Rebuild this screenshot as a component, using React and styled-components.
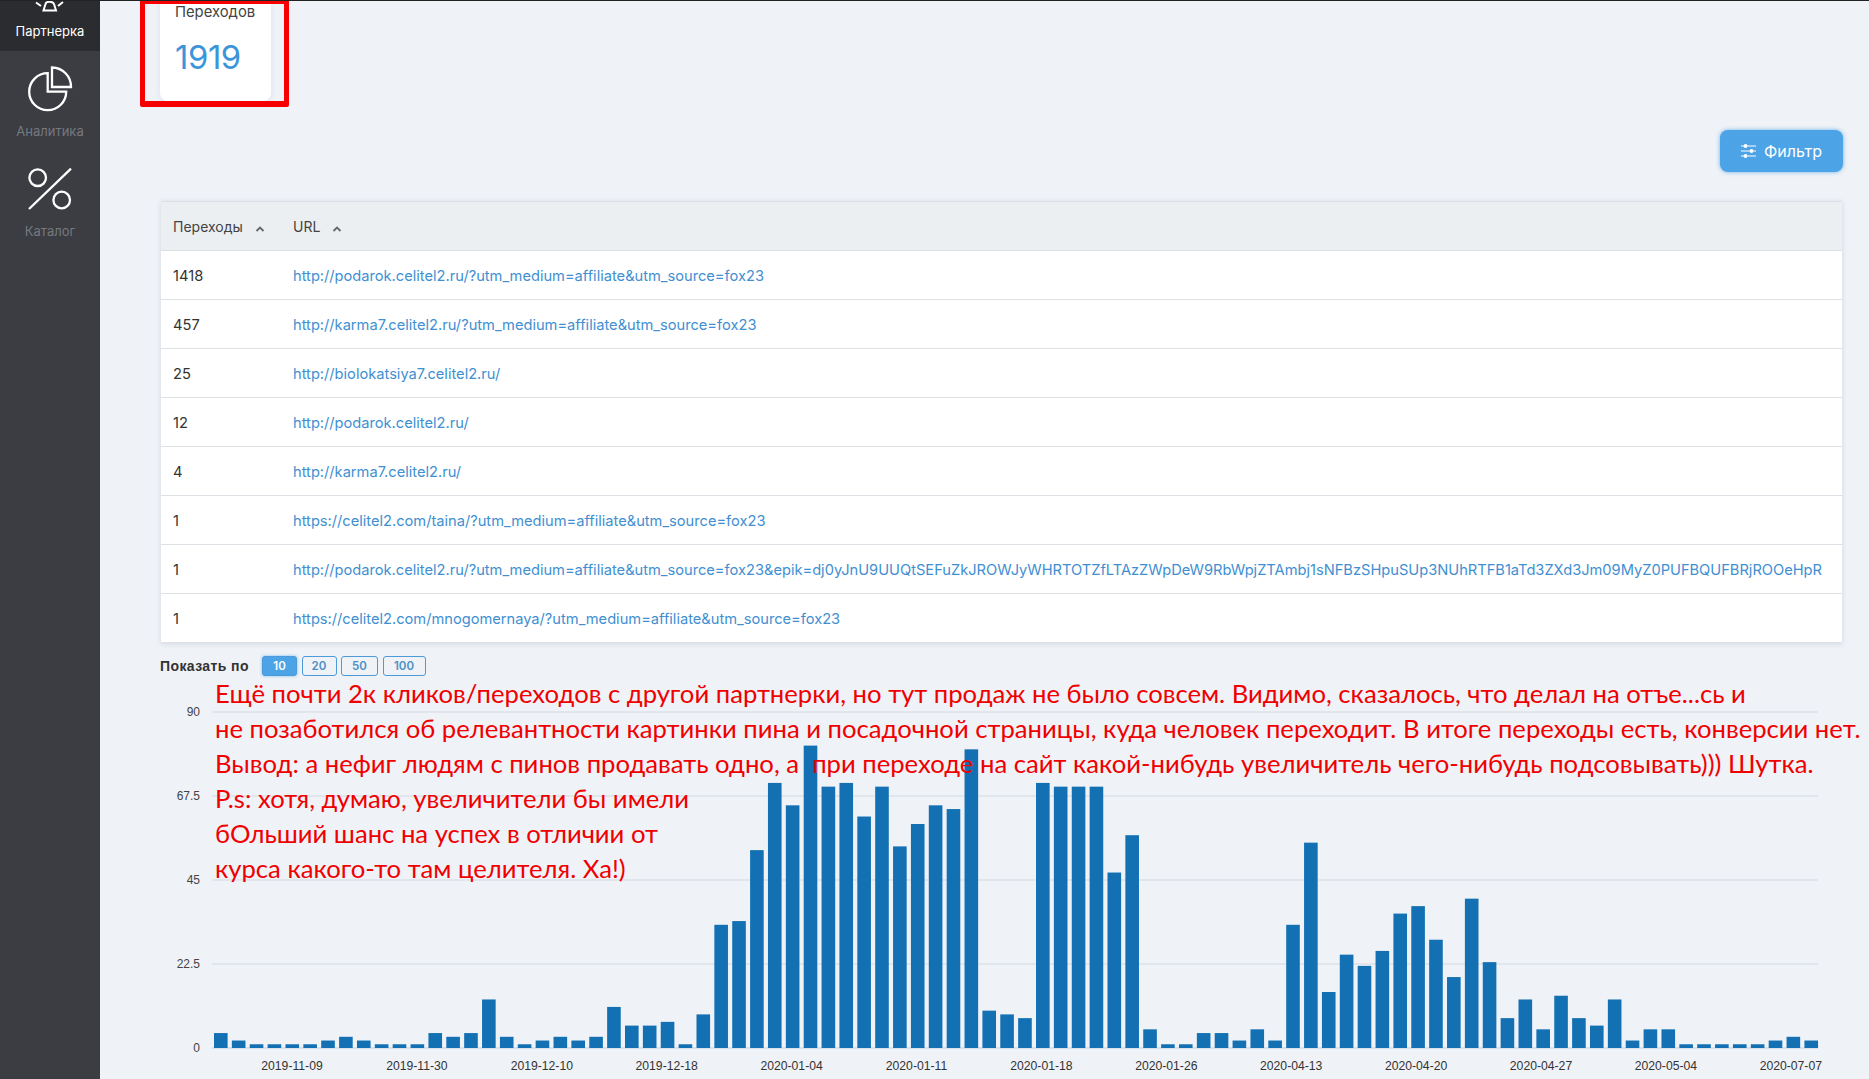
import React from "react";
import styled, { createGlobalStyle } from "styled-components";

const Global = createGlobalStyle`
  html, body { margin: 0; padding: 0; height: 100%; overflow: hidden; background: #eff2f7; }
  #root { height: 100%; }
`;

const Shell = styled.div`
  position: relative;
  display: flex;
  width: 1869px;
  height: 1079px;
  overflow: hidden;
  background: #eff2f7;
  border-top: 1px solid #222;
  box-sizing: border-box;
  font-family: Inter, "Noto Sans", sans-serif;
  color: #333;
`;

const Sidebar = styled.nav`
  width: 100px;
  flex: none;
  background: #3b3d43;
  display: flex;
  flex-direction: column;
`;

const NavItem = styled.a`
  height: ${(p) => p.$h}px;
  display: flex;
  flex-direction: column;
  align-items: center;
  justify-content: flex-end;
  gap: ${(p) => (p.$active ? 10 : 11)}px;
  padding-bottom: 12px;
  box-sizing: border-box;
  background: ${(p) => (p.$active ? "#2b2c30" : "transparent")};
  color: ${(p) => (p.$active ? "#fff" : "#77797e")};
  font-size: 13px;
  line-height: 16px;
  overflow: hidden;
  svg { flex: none; }
`;

const Main = styled.main`
  flex: 1;
  min-width: 0;
  padding: 0 26px 0 60px;
  display: flex;
  flex-direction: column;
`;

const StatCard = styled.div`
  width: 111px;
  height: 100px;
  box-sizing: border-box;
  background: #fff;
  border-radius: 0 0 8px 8px;
  box-shadow: 0 1px 6px rgba(40, 60, 90, 0.08);
  padding: 1px 15px 0 15px;
`;

const StatLabel = styled.div`
  font-size: 14.8px;
  line-height: 20px;
  color: #444;
`;

const StatValue = styled.div`
  margin-top: 15px;
  font-size: 32.8px;
  line-height: 40px;
  letter-spacing: -0.4px;
  color: #3c95d9;
`;

const RedFrame = styled.div`
  position: absolute;
  left: 140px;
  top: -3px;
  width: 149px;
  height: 109px;
  box-sizing: border-box;
  border: 6px solid #f60000;
  border-left-width: 5px;
  border-right-width: 5px;
  border-radius: 2px;
`;

const ToolRow = styled.div`
  display: flex;
  justify-content: flex-end;
  margin-top: 29px;
  margin-bottom: 29px;
`;

const FilterButton = styled.button`
  width: 123px;
  height: 42px;
  display: flex;
  align-items: center;
  justify-content: center;
  gap: 8px;
  border: none;
  border-radius: 8px;
  background: #4ca3e6;
  box-shadow: 0 0 4px rgba(76, 163, 230, 0.8);
  color: #fff;
  font: 16px Inter, "Noto Sans", sans-serif;
`;

const Table = styled.table`
  width: calc(100% - 2px);
  margin: 0 1px;
  border-collapse: collapse;
  table-layout: fixed;
  background: #fff;
  box-shadow: 0 1px 5px rgba(40, 60, 90, 0.14);
  font-size: 14.7px;
`;

const HeadRow = styled.tr`
  height: 49px;
  background: #eceff2;
  border-top: 1px solid #dcdfe3;
  border-bottom: 1px solid #dcdfe3;
`;

const HeadCell = styled.th`
  width: ${(p) => p.$w || "auto"};
  padding: 0 12px;
  text-align: left;
  font-weight: 400;
  font-size: 14px;
  color: #444;
`;

const Row = styled.tr`
  height: 49px;
  border-bottom: 1px solid #dde0e4;
`;

const Cell = styled.td`
  padding: 1px 12px 0;
  color: #333;
  white-space: nowrap;
`;

const LinkText = styled.a`
  color: #3f8fd2;
  font-size: 14.65px;
`;

const Caret = styled.svg`
  width: 10px;
  height: 6px;
  margin-left: 12px;
  vertical-align: 0;
`;

const Pager = styled.div`
  display: flex;
  align-items: center;
  gap: 4.5px;
  margin-top: 13px;
  height: 20px;
`;

const PagerLabel = styled.span`
  width: 97.5px;
  font: bold 14px "Liberation Sans", sans-serif;
  color: #333;
  letter-spacing: 0.4px;
  white-space: nowrap;
`;

const PageButton = styled.button`
  width: ${(p) => p.$w}px;
  height: 20px;
  padding: 0;
  box-sizing: border-box;
  border-radius: 3px;
  border: 1px solid #4c9ad9;
  background: ${(p) => (p.$active ? "#4ca3e6" : "transparent")};
  box-shadow: ${(p) => (p.$active ? "0 0 3px rgba(76,163,230,.7)" : "none")};
  color: ${(p) => (p.$active ? "#fff" : "#4c8fc5")};
  font: 600 11.5px Inter, sans-serif;
`;

const Chart = styled.svg`
  display: block;
  position: absolute;
  left: 100px;
  top: 689px;
  width: 1769px;
  height: 389px;
  font-family: "Liberation Sans", sans-serif;
`;

const Note = styled.div`
  position: absolute;
  left: 215px;
  top: 675px;
  font-family: Lato, "Open Sans", sans-serif;
  font-size: 25.65px;
  line-height: 35.1px;
  color: #f00000;
  white-space: pre;
`;

const urls = [
  ["1418", "http://podarok.celitel2.ru/?utm_medium=affiliate&utm_source=fox23"],
  ["457", "http://karma7.celitel2.ru/?utm_medium=affiliate&utm_source=fox23"],
  ["25", "http://biolokatsiya7.celitel2.ru/"],
  ["12", "http://podarok.celitel2.ru/"],
  ["4", "http://karma7.celitel2.ru/"],
  ["1", "https://celitel2.com/taina/?utm_medium=affiliate&utm_source=fox23"],
  ["1", "http://podarok.celitel2.ru/?utm_medium=affiliate&utm_source=fox23&epik=dj0yJnU9UUQtSEFuZkJROWJyWHRTOTZfLTAzZWpDeW9RbWpjZTAmbj1sNFBzSHpuSUp3NUhRTFB1aTd3ZXd3Jm09MyZ0PUFBQUFBRjROOeHpR"],
  ["1", "https://celitel2.com/mnogomernaya/?utm_medium=affiliate&utm_source=fox23"],
];

const values = [
  4,2,1,1,1,1,2,3,2,1,1,1,4,3,4,13,3,1,2,3,2,3,11,6,6,7,1,9,33,34,
  53,71,65,81,70,71,62,70,54,60,65,64,80,10,9,8,71,70,70,70,47,57,5,1,1,4,4,2,5,2,
  33,55,15,25,22,26,36,38,29,19,40,23,8,13,5,14,8,6,13,2,5,5,1,1,1,1,1,2,3,2,
];

const dates = ["2019-11-09","2019-11-30","2019-12-10","2019-12-18","2020-01-04","2020-01-11","2020-01-18","2020-01-26","2020-04-13","2020-04-20","2020-04-27","2020-05-04","2020-07-07"];
const ticks = ["90", "67.5", "45", "22.5", "0"];

const note = `Ещё почти 2к кликов/переходов с другой партнерки, но тут продаж не было совсем. Видимо, сказалось, что делал на отъе...сь и
не позаботился об релевантности картинки пина и посадочной страницы, куда человек переходит. В итоге переходы есть, конверсии нет.
Вывод: а нефиг людям с пинов продавать одно, а  при переходе на сайт какой-нибудь увеличитель чего-нибудь подсовывать))) Шутка.
P.s: хотя, думаю, увеличители бы имели
бОльший шанс на успех в отличии от
курса какого-то там целителя. Ха!)`;

const SortCaret = () => (
  <Caret viewBox="0 0 10 6">
    <path d="M1.5 5 L5 1.5 L8.5 5" fill="none" stroke="#666" strokeWidth="1.8" />
  </Caret>
);

const PartnerIcon = () => (
  <svg width="38" height="18" viewBox="0 0 38 18" fill="none" stroke="#fff" strokeWidth="2">
    <path d="M5 7.5 L10 11 M32 7 L27 11" />
    <path d="M12.5 15.5 H25 L23 9 C22 6 15 6 14.5 9 Z" />
  </svg>
);

const PieIcon = () => (
  <svg width="46" height="46" viewBox="0 0 46 46" fill="none" stroke="#fff" strokeWidth="2.3">
    <path d="M20.7 7.2 A18.5 18.5 0 1 0 39.2 25.7 L20.7 25.7 Z" />
    <path d="M25 1.5 A19.2 19.2 0 0 1 44 21 L25 21 Z" />
  </svg>
);

const PercentIcon = () => (
  <svg width="46" height="46" viewBox="0 0 46 46" fill="none" stroke="#fff" strokeWidth="2.3">
    <path d="M44 2.7 L2 43" />
    <circle cx="10.7" cy="11.7" r="8.3" />
    <circle cx="34.7" cy="34" r="8.3" />
  </svg>
);

const SlidersIcon = () => (
  <svg width="15" height="14" viewBox="0 0 15 14" stroke="#fff" strokeWidth="1.1" fill="#fff">
    <path d="M0 2 H15 M0 7 H15 M0 12 H15" />
    <circle cx="4.5" cy="2" r="1.9" stroke="none" />
    <circle cx="10.5" cy="7" r="1.9" stroke="none" />
    <circle cx="4.5" cy="12" r="1.9" stroke="none" />
  </svg>
);

const ChartView = () => {
  const ox = 100, oy = 690;
  const base = 1048 - oy;
  const unit = 336 / 90;
  return (
    <Chart viewBox="0 0 1769 389">
      {ticks.map((t, i) => {
        const y = 712 - oy + i * 84;
        return (
          <g key={t}>
            <line x1={212 - ox} x2={1818 - ox} y1={y} y2={y} stroke={i === 4 ? "#cfdbe8" : "#dde1e8"} strokeWidth="1.5" />
            <text x={200 - ox} y={y + 4} textAnchor="end" fontSize="12" fill="#444">{t}</text>
          </g>
        );
      })}
      {values.map((v, i) => (
        <rect key={i} x={214 - ox + i * 17.87} y={base - v * unit} width="13.6" height={v * unit} fill="#1270b3" />
      ))}
      {dates.map((d, i) => (
        <text key={d} x={292 - ox + i * 124.9} y={1070 - oy} textAnchor="middle" fontSize="12.2" fill="#333">{d}</text>
      ))}
    </Chart>
  );
};

export default function App() {
  return (
    <Shell>
      <Global />
      <Sidebar>
        <NavItem $active $h={50}><PartnerIcon />Партнерка</NavItem>
        <NavItem $h={100}><PieIcon />Аналитика</NavItem>
        <NavItem $h={100}><PercentIcon />Каталог</NavItem>
      </Sidebar>
      <Main>
        <StatCard>
          <StatLabel>Переходов</StatLabel>
          <StatValue>1919</StatValue>
        </StatCard>
        <ToolRow>
          <FilterButton><SlidersIcon />Фильтр</FilterButton>
        </ToolRow>
        <Table>
          <thead>
            <HeadRow>
              <HeadCell $w="96px">Переходы<SortCaret /></HeadCell>
              <HeadCell>URL<SortCaret /></HeadCell>
            </HeadRow>
          </thead>
          <tbody>
            {urls.map(([n, u], i) => (
              <Row key={i}>
                <Cell>{n}</Cell>
                <Cell><LinkText>{u}</LinkText></Cell>
              </Row>
            ))}
          </tbody>
        </Table>
        <Pager>
          <PagerLabel>Показать по</PagerLabel>
          <PageButton $w={35} $active>10</PageButton>
          <PageButton $w={35}>20</PageButton>
          <PageButton $w={37}>50</PageButton>
          <PageButton $w={43}>100</PageButton>
        </Pager>
      </Main>
      <RedFrame />
      <ChartView />
      <Note>{note}</Note>
    </Shell>
  );
}
